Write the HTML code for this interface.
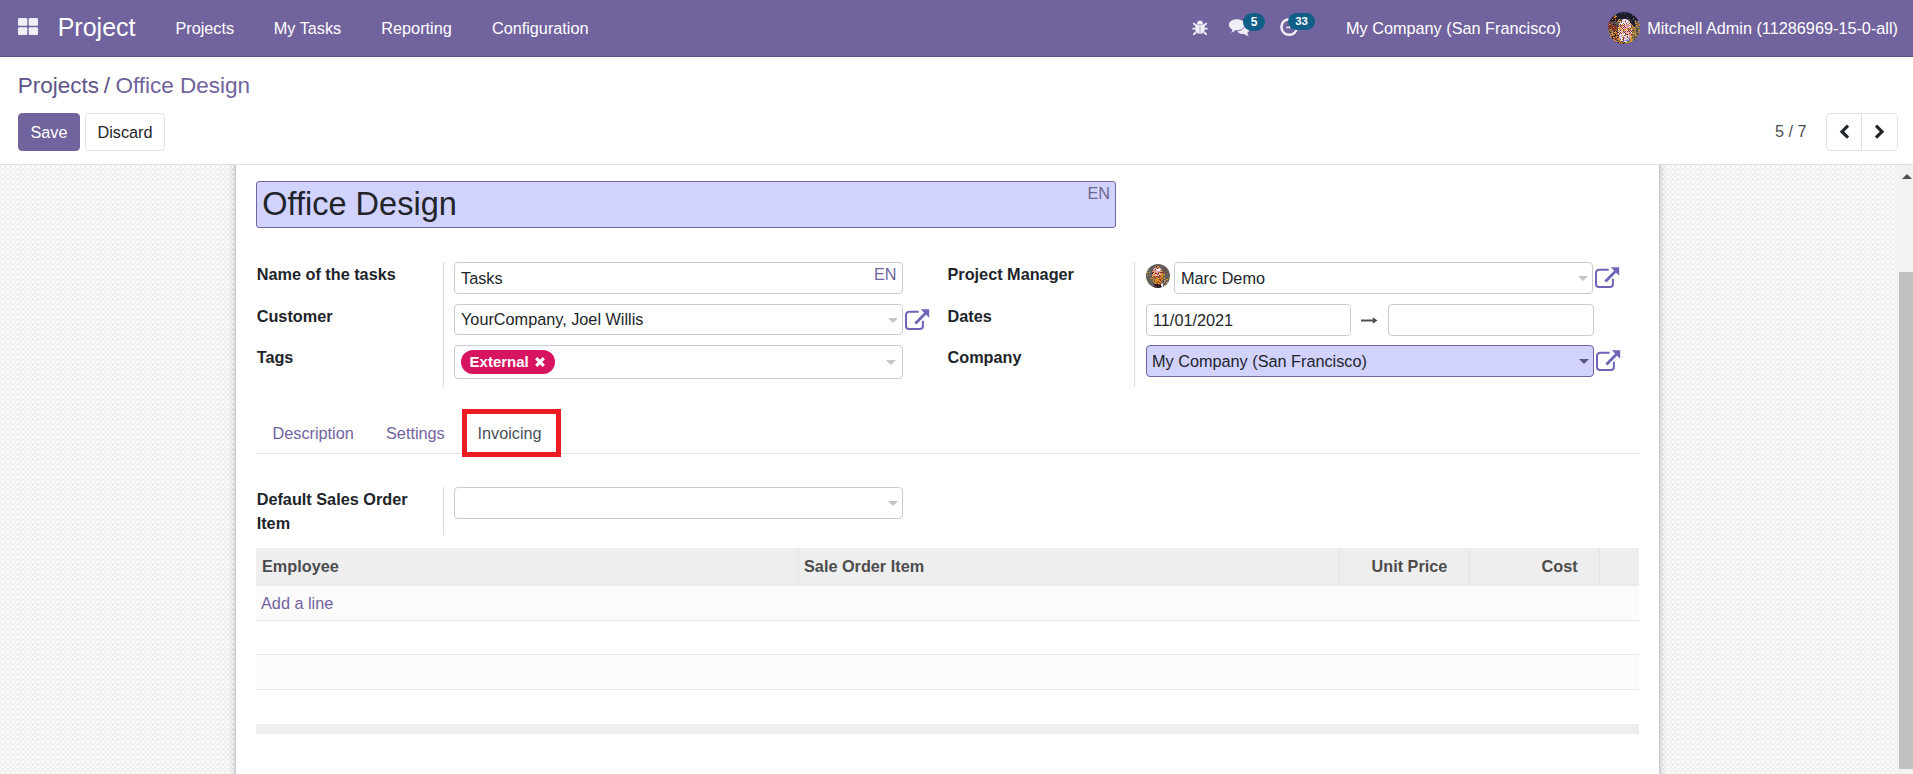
<!DOCTYPE html>
<html lang="en">
<head>
<meta charset="utf-8">
<title>Office Design - Odoo</title>
<style>
*{box-sizing:border-box;margin:0;padding:0}
html,body{width:1913px;height:774px;overflow:hidden;background:#fff}
body{font-family:"Liberation Sans",sans-serif;font-size:16.25px;line-height:24.375px;color:#212529;position:relative}
.abs{position:absolute}
/* ---------- navbar ---------- */
.navbar{position:absolute;left:0;top:0;width:1913px;height:57px;background:#71639e;border-bottom:1px solid #5b5084;color:#fff}
.navbar .t{position:absolute;white-space:nowrap;color:#fff;line-height:24px}
.brand{font-size:25px;left:57.7px;top:12px;line-height:30px !important}
.appsicon{position:absolute;left:18px;top:18px;width:20px;height:17px}
.badge{position:absolute;background:#115e89;color:#fff;font-weight:bold;font-size:12px;line-height:18px;height:18px;border-radius:9px;text-align:center}
.avatar{position:absolute;border-radius:50%;overflow:hidden}
/* ---------- control panel ---------- */
.cp{position:absolute;left:0;top:57px;width:1913px;height:108px;background:#fff;border-bottom:1px solid #dcdfe4}
.bc{position:absolute;left:17.8px;top:14px;font-size:22.5px;line-height:30px;white-space:nowrap;color:#71639e}
.bc .a{color:#5e5389}
.btn{position:absolute;top:56px;height:38px;border-radius:4px;font-size:16.25px;line-height:36px;text-align:center;border:1px solid transparent}
.btn-save{left:18px;width:62px;background:#71639e;border-color:#71639e;color:#fff}
.btn-discard{left:85px;width:80px;background:#fff;border-color:#dee2e6;color:#212529}
.pager{position:absolute;left:1775px;top:62px;font-size:16.25px;line-height:24px;color:#495057;white-space:nowrap}
.pbtn{position:absolute;top:56px;height:38px;width:36px;background:#fff;border:1px solid #dee2e6}
/* ---------- content ---------- */
.content{position:absolute;left:0;top:165px;width:1897px;height:609px;overflow:hidden;
 background:#f4f4f4}
.sheet{position:absolute;left:235px;top:-40px;width:1425px;height:700px;background:#fff;border:1px solid #c8cad0;box-shadow:0 0 8px -1px rgba(0,0,0,.28)}
.sb{position:absolute;left:1897px;top:165px;width:16px;height:609px;background:#f2f2f2}
.sb .thumb{position:absolute;left:2px;top:107px;width:14px;height:497px;background:#c1c1c1}
.sb .up{position:absolute;left:5px;top:9px;width:0;height:0;border-left:5px solid transparent;border-right:5px solid transparent;border-bottom:5px solid #505050}
/* form pieces (coords relative to page) */
.page{position:absolute;left:0;top:0;width:1897px;height:774px;overflow:hidden;pointer-events:none}
.inp{position:absolute;background:#fff;border:1px solid #ccc;border-radius:4px;height:32px;white-space:nowrap;font-size:16.25px;line-height:30px;padding-left:6px;color:#212529;overflow:hidden}
.req{background:#d2d2ff;border-color:#71639e}
.lbl{position:absolute;font-weight:bold;color:#212529;white-space:nowrap;font-size:16.25px;line-height:24.375px}
.vsep{position:absolute;width:1px;background:#dcdcdc}
.caret{position:absolute;width:0;height:0;border-left:5px solid transparent;border-right:5px solid transparent;border-top:5px solid #c4c4c4}
.en{position:absolute;color:#71639e;font-size:16.25px;line-height:24px}
.ext{position:absolute;width:25px;height:22px}
.tag{position:absolute;left:461px;top:350px;width:94px;height:24px;border-radius:12px;background:#d6145f;color:#fff;font-weight:bold;font-size:15px;line-height:24px;padding-left:8.6px;white-space:nowrap}
.tabs{position:absolute;left:256px;top:453px;width:1383px;height:1px;background:#dee2e6}
.tab{position:absolute;top:421px;font-size:16.25px;line-height:24px;color:#71639e;white-space:nowrap}
.redbox{position:absolute;left:462px;top:409px;width:99px;height:48px;border:5px solid #ed1c24}
/* list */
.lst{position:absolute;left:256px;width:1383px}
.th{position:absolute;font-weight:bold;color:#4c4c4c;font-size:16.25px;line-height:24px;white-space:nowrap}
.csep{position:absolute;top:548px;width:1px;height:36px;background:#e1e3e6}
</style>
</head>
<body>

<!-- ================= NAVBAR ================= -->
<header class="navbar">
  <svg class="appsicon" viewBox="0 0 20 17"><g fill="#f1eff6"><rect x="0" y="0" width="9.300" height="7.800" rx="1.200"/><rect x="10.700" y="0" width="9.300" height="7.800" rx="1.200"/><rect x="0" y="9.200" width="9.300" height="7.800" rx="1.200"/><rect x="10.700" y="9.200" width="9.300" height="7.800" rx="1.200"/></g></svg>
  <span class="t brand">Project</span>
  <nav>
    <span class="t" style="left:175.4px;top:16px">Projects</span>
    <span class="t" style="left:273.8px;top:16px">My Tasks</span>
    <span class="t" style="left:381.3px;top:16px">Reporting</span>
    <span class="t" style="left:491.9px;top:16px">Configuration</span>
  </nav>
  <!-- bug -->
  <svg class="abs" style="left:1192px;top:20px;width:16px;height:16px" viewBox="0 0 16 16"><g fill="#f1eff6"><path d="M5 4.500a3 3.900 0 0 1 6 0z"/><path d="M3.200 4.800h4.550v9.300c-2.700-.2-4.550-2.200-4.550-4.800z"/><path d="M12.800 4.800H8.250v9.300c2.700-.2 4.550-2.200 4.550-4.800z"/></g><g stroke="#f1eff6" stroke-width="1.900" fill="none"><path d="M.4 8.650h3.200M15.600 8.650h-3.200M1.200 3.300l3 2M14.800 3.300l-3 2M1.400 14.700l2.600-2.500M14.600 14.700l-2.600-2.500"/></g></svg>
  <!-- chat -->
  <svg class="abs" style="left:1229px;top:18px;width:21px;height:18px" viewBox="0 0 21 18"><g fill="#f1eff6"><path d="M14 6.900c3.500 0 6.300 2.100 6.300 4.600 0 1.400-.8 2.600-2.100 3.500.3 1.100.9 2 1.600 2.900-1.800-.2-3.400-.9-4.500-1.900-.4.100-.9.100-1.300.1-3.500 0-6.300-2.100-6.300-4.600s2.800-4.600 6.300-4.600z"/><path d="M7.800 1.200c4.300 0 7.800 2.500 7.800 5.600s-3.500 5.600-7.800 5.600c-.5 0-1-.03-1.500-.1-1.200 1.200-2.700 2.100-4.500 2.300.8-.9 1.400-1.900 1.600-3.100C1.300 10.500 0 8.800 0 6.800 0 3.700 3.500 1.200 7.800 1.200z" stroke="#71639e" stroke-width="0.900" transform="translate(7.800 6.800) scale(1.070) translate(-7.800 -6.800)"/></g></svg>
  <span class="badge" style="left:1243px;top:12.800px;width:22px">5</span>
  <!-- clock -->
  <svg class="abs" style="left:1279px;top:16.900px;width:20px;height:20px" viewBox="0 0 20 20"><circle cx="10.200" cy="10" r="7.800" fill="none" stroke="#f1eff6" stroke-width="2.500"/><path d="M10.700 5.500v5.100H7.200" fill="none" stroke="#f1eff6" stroke-width="1.500"/></svg>
  <span class="badge" style="left:1288px;top:12.500px;width:27px;height:17.500px;line-height:17px;font-size:11.400px">33</span>
  <span class="t" style="left:1346px;top:16px">My Company (San Francisco)</span>
  <!-- user avatar -->
  <svg class="avatar" style="left:1608px;top:12px;width:32px;height:32px" viewBox="0 0 32 32" shape-rendering="crispEdges"><path fill="#1c1c2a" d="M10 0h12v1h-12zM8 1h5v1h-5zM14 1h2v1h-2zM17 1h7v1h-7zM6 2h20v1h-20zM6 3h1v1h-1zM8 3h16v1h-16zM25 3h2v1h-2zM4 4h1v1h-1zM9 4h19v1h-19zM3 5h3v1h-3zM8 5h11v1h-11zM20 5h9v1h-9zM2 6h3v1h-3zM6 6h19v1h-19zM26 6h4v1h-4zM2 7h2v1h-2zM5 7h2v1h-2zM9 7h1v1h-1zM22 7h3v1h-3zM26 7h4v1h-4zM1 8h9v1h-9zM22 8h5v1h-5zM28 8h3v1h-3zM5 9h1v1h-1zM8 9h1v1h-1zM22 9h1v1h-1zM24 9h2v1h-2zM22 10h5v1h-5zM23 11h4v1h-4zM5 12h1v1h-1zM7 12h1v1h-1zM24 12h3v1h-3zM9 13h1v1h-1zM25 13h2v1h-2zM26 14h1v1h-1zM1 19h1v1h-1zM6 19h1v1h-1zM8 19h1v1h-1zM2 20h1v1h-1zM9 20h1v1h-1zM0 21h1v1h-1zM6 21h1v1h-1zM7 22h1v1h-1zM1 23h1v1h-1zM7 23h1v1h-1zM10 23h1v1h-1zM4 24h1v1h-1zM6 24h1v1h-1zM2 25h1v1h-1zM4 25h1v1h-1zM9 25h1v1h-1zM4 26h1v1h-1zM4 27h1v1h-1zM5 28h1v1h-1zM9 28h1v1h-1zM9 30h2v1h-2zM16 30h1v1h-1zM15 31h1v1h-1z"/><path fill="#62605f" d="M13 1h1v1h-1zM16 1h1v1h-1zM24 3h1v1h-1zM19 5h1v1h-1zM25 6h1v1h-1zM10 7h1v1h-1zM12 7h1v1h-1zM14 7h1v1h-1zM19 7h3v1h-3zM25 7h1v1h-1zM13 8h1v1h-1zM20 8h2v1h-2zM27 8h1v1h-1zM6 9h2v1h-2zM13 9h1v1h-1zM17 9h1v1h-1zM23 9h1v1h-1zM26 9h1v1h-1zM28 9h2v1h-2zM3 10h1v1h-1zM5 10h1v1h-1zM8 10h4v1h-4zM13 10h1v1h-1zM27 10h3v1h-3zM31 10h1v1h-1zM3 11h2v1h-2zM7 11h4v1h-4zM15 11h1v1h-1zM18 11h1v1h-1zM21 11h1v1h-1zM29 11h3v1h-3zM2 12h1v1h-1zM8 12h2v1h-2zM28 12h1v1h-1zM4 13h1v1h-1zM10 13h1v1h-1zM23 13h1v1h-1zM30 13h1v1h-1zM8 14h1v1h-1zM25 14h1v1h-1zM29 14h3v1h-3zM0 15h2v1h-2zM23 15h1v1h-1zM28 15h2v1h-2zM31 15h1v1h-1zM3 16h1v1h-1zM8 16h2v1h-2zM24 16h2v1h-2zM27 16h5v1h-5zM0 17h1v1h-1zM7 17h1v1h-1zM26 17h1v1h-1zM28 17h1v1h-1zM30 17h1v1h-1zM0 18h1v1h-1zM3 18h2v1h-2zM27 18h2v1h-2zM3 19h1v1h-1zM5 19h1v1h-1zM9 19h1v1h-1zM25 19h2v1h-2zM29 19h2v1h-2zM0 20h2v1h-2zM3 20h1v1h-1zM5 20h1v1h-1zM22 20h1v1h-1zM24 20h1v1h-1zM26 20h1v1h-1zM28 20h2v1h-2zM2 21h1v1h-1zM28 21h3v1h-3zM1 22h3v1h-3zM9 22h1v1h-1zM11 22h1v1h-1zM17 22h1v1h-1zM24 22h2v1h-2zM29 22h2v1h-2zM5 23h1v1h-1zM16 23h1v1h-1zM25 23h2v1h-2zM29 23h1v1h-1zM3 24h1v1h-1zM7 24h1v1h-1zM10 24h1v1h-1zM19 24h1v1h-1zM24 24h1v1h-1zM26 24h3v1h-3zM15 25h1v1h-1zM19 25h1v1h-1zM24 25h3v1h-3zM8 26h2v1h-2zM15 26h1v1h-1zM24 26h1v1h-1zM6 27h1v1h-1zM12 27h1v1h-1zM21 27h1v1h-1zM25 27h1v1h-1zM27 27h1v1h-1zM8 28h1v1h-1zM10 28h1v1h-1zM15 28h1v1h-1zM21 28h1v1h-1zM25 28h1v1h-1zM13 29h3v1h-3zM19 29h2v1h-2zM24 29h2v1h-2zM12 30h1v1h-1zM21 30h2v1h-2zM11 31h1v1h-1zM14 31h1v1h-1zM16 31h1v1h-1zM18 31h3v1h-3z"/><path fill="#8a2c1c" d="M5 3h1v1h-1zM5 4h2v1h-2zM5 6h1v1h-1zM8 7h1v1h-1zM1 9h1v1h-1zM3 9h1v1h-1zM0 10h3v1h-3zM4 10h1v1h-1zM6 10h1v1h-1zM0 11h2v1h-2zM0 12h1v1h-1zM3 12h1v1h-1zM6 12h1v1h-1zM12 12h1v1h-1zM16 12h1v1h-1zM0 13h1v1h-1zM2 13h2v1h-2zM7 13h2v1h-2zM13 13h1v1h-1zM15 13h1v1h-1zM0 14h6v1h-6zM7 14h1v1h-1zM9 14h2v1h-2zM12 14h1v1h-1zM16 14h1v1h-1zM23 14h1v1h-1zM2 15h3v1h-3zM6 15h3v1h-3zM13 15h1v1h-1zM15 15h1v1h-1zM17 15h1v1h-1zM0 16h3v1h-3zM4 16h4v1h-4zM14 16h1v1h-1zM20 16h1v1h-1zM22 16h1v1h-1zM4 17h3v1h-3zM8 17h1v1h-1zM15 17h1v1h-1zM21 17h1v1h-1zM5 18h3v1h-3zM9 18h1v1h-1zM12 18h1v1h-1zM20 18h1v1h-1zM22 18h1v1h-1zM15 19h1v1h-1zM17 19h1v1h-1zM19 19h1v1h-1zM21 19h1v1h-1zM23 19h1v1h-1zM10 20h1v1h-1zM12 20h1v1h-1zM16 20h1v1h-1zM5 21h1v1h-1zM8 21h1v1h-1zM11 21h1v1h-1zM13 21h1v1h-1zM17 21h1v1h-1zM21 21h1v1h-1zM18 22h2v1h-2zM23 22h1v1h-1zM6 23h1v1h-1zM8 23h2v1h-2zM5 24h1v1h-1zM7 25h1v1h-1zM10 25h1v1h-1zM5 26h1v1h-1zM7 26h1v1h-1zM7 27h2v1h-2zM15 27h1v1h-1zM7 29h1v1h-1zM11 29h1v1h-1zM8 30h1v1h-1zM14 30h1v1h-1zM12 31h1v1h-1z"/><path fill="#d8902c" d="M7 3h1v1h-1zM7 4h2v1h-2zM6 5h2v1h-2zM4 7h1v1h-1zM7 7h1v1h-1zM11 7h1v1h-1zM10 8h1v1h-1zM9 9h4v1h-4zM21 9h1v1h-1zM27 9h1v1h-1zM30 9h1v1h-1zM30 10h1v1h-1zM27 11h2v1h-2zM1 12h1v1h-1zM14 12h1v1h-1zM18 12h1v1h-1zM20 12h1v1h-1zM23 12h1v1h-1zM30 12h2v1h-2zM11 13h1v1h-1zM14 13h1v1h-1zM18 13h1v1h-1zM24 13h1v1h-1zM28 13h2v1h-2zM31 13h1v1h-1zM14 14h1v1h-1zM24 14h1v1h-1zM28 14h1v1h-1zM5 15h1v1h-1zM11 15h1v1h-1zM21 15h1v1h-1zM24 15h4v1h-4zM30 15h1v1h-1zM10 16h3v1h-3zM18 16h2v1h-2zM23 16h1v1h-1zM26 16h1v1h-1zM2 17h2v1h-2zM11 17h3v1h-3zM16 17h2v1h-2zM19 17h2v1h-2zM22 17h1v1h-1zM24 17h2v1h-2zM27 17h1v1h-1zM31 17h1v1h-1zM1 18h1v1h-1zM8 18h1v1h-1zM10 18h1v1h-1zM14 18h3v1h-3zM18 18h1v1h-1zM26 18h1v1h-1zM30 18h2v1h-2zM0 19h1v1h-1zM2 19h1v1h-1zM4 19h1v1h-1zM7 19h1v1h-1zM11 19h1v1h-1zM24 19h1v1h-1zM27 19h1v1h-1zM31 19h1v1h-1zM4 20h1v1h-1zM6 20h3v1h-3zM14 20h1v1h-1zM20 20h1v1h-1zM25 20h1v1h-1zM27 20h1v1h-1zM30 20h2v1h-2zM1 21h1v1h-1zM3 21h2v1h-2zM7 21h1v1h-1zM9 21h1v1h-1zM24 21h4v1h-4zM31 21h1v1h-1zM4 22h3v1h-3zM8 22h1v1h-1zM22 22h1v1h-1zM26 22h2v1h-2zM2 23h3v1h-3zM14 23h1v1h-1zM17 23h1v1h-1zM21 23h4v1h-4zM27 23h2v1h-2zM30 23h1v1h-1zM2 24h1v1h-1zM8 24h2v1h-2zM15 24h1v1h-1zM18 24h1v1h-1zM23 24h1v1h-1zM25 24h1v1h-1zM29 24h1v1h-1zM3 25h1v1h-1zM5 25h2v1h-2zM8 25h1v1h-1zM14 25h1v1h-1zM23 25h1v1h-1zM29 25h1v1h-1zM3 26h1v1h-1zM6 26h1v1h-1zM10 26h2v1h-2zM22 26h2v1h-2zM25 26h1v1h-1zM27 26h2v1h-2zM5 27h1v1h-1zM9 27h3v1h-3zM14 27h1v1h-1zM22 27h3v1h-3zM6 28h2v1h-2zM11 28h2v1h-2zM22 28h3v1h-3zM26 28h1v1h-1zM6 29h1v1h-1zM8 29h3v1h-3zM12 29h1v1h-1zM21 29h3v1h-3zM11 30h1v1h-1zM13 30h1v1h-1zM15 30h1v1h-1zM17 30h4v1h-4zM23 30h1v1h-1zM10 31h1v1h-1zM13 31h1v1h-1zM17 31h1v1h-1z"/><path fill="#4a4648" d="M13 7h1v1h-1zM11 8h2v1h-2zM2 9h1v1h-1zM4 9h1v1h-1zM7 10h1v1h-1zM2 11h1v1h-1zM5 11h2v1h-2zM4 12h1v1h-1zM10 12h1v1h-1zM27 12h1v1h-1zM29 12h1v1h-1zM1 13h1v1h-1zM5 13h2v1h-2zM27 13h1v1h-1zM6 14h1v1h-1zM27 14h1v1h-1zM9 15h1v1h-1zM1 17h1v1h-1zM9 17h1v1h-1zM29 17h1v1h-1zM2 18h1v1h-1zM24 18h2v1h-2zM29 18h1v1h-1zM28 19h1v1h-1zM28 22h1v1h-1zM27 25h2v1h-2zM26 26h1v1h-1zM26 27h1v1h-1zM21 31h1v1h-1z"/><path fill="#ececf2" d="M15 7h3v1h-3zM14 8h3v1h-3zM18 8h2v1h-2zM18 9h3v1h-3zM12 10h1v1h-1zM14 10h3v1h-3zM18 10h1v1h-1zM12 11h3v1h-3zM16 11h1v1h-1zM19 11h2v1h-2zM13 12h1v1h-1zM15 12h1v1h-1zM17 12h1v1h-1zM21 12h1v1h-1zM15 14h1v1h-1zM17 14h1v1h-1zM21 14h2v1h-2zM12 15h1v1h-1zM14 15h1v1h-1zM18 15h1v1h-1zM22 15h1v1h-1zM15 16h1v1h-1zM10 17h1v1h-1zM14 17h1v1h-1zM18 17h1v1h-1zM23 17h1v1h-1zM13 18h1v1h-1zM17 18h1v1h-1zM19 18h1v1h-1zM12 19h1v1h-1zM14 19h1v1h-1zM18 19h1v1h-1zM22 19h1v1h-1zM13 20h1v1h-1zM23 20h1v1h-1zM10 21h1v1h-1zM14 21h1v1h-1zM16 21h1v1h-1zM20 21h1v1h-1zM12 22h5v1h-5zM11 23h2v1h-2zM15 23h1v1h-1zM18 23h1v1h-1zM20 23h1v1h-1zM12 24h1v1h-1zM14 24h1v1h-1zM16 24h2v1h-2zM20 24h1v1h-1zM22 24h1v1h-1zM11 25h3v1h-3zM17 25h2v1h-2zM13 26h2v1h-2zM18 26h2v1h-2zM13 27h1v1h-1zM16 27h2v1h-2zM20 27h1v1h-1zM13 28h2v1h-2zM16 29h3v1h-3z"/><path fill="#e090c0" d="M18 7h1v1h-1zM17 8h1v1h-1zM15 9h1v1h-1zM17 10h1v1h-1zM19 10h2v1h-2zM11 11h1v1h-1zM19 12h1v1h-1zM22 12h1v1h-1zM12 13h1v1h-1zM16 13h2v1h-2zM19 13h4v1h-4zM11 14h1v1h-1zM13 14h1v1h-1zM18 14h3v1h-3zM16 15h1v1h-1zM19 15h1v1h-1zM16 16h2v1h-2zM11 18h1v1h-1zM21 18h1v1h-1zM23 18h1v1h-1zM13 19h1v1h-1zM16 19h1v1h-1zM20 19h1v1h-1zM15 20h1v1h-1zM18 20h1v1h-1zM12 21h1v1h-1zM15 21h1v1h-1zM19 21h1v1h-1zM22 21h2v1h-2zM10 22h1v1h-1zM20 22h2v1h-2zM13 23h1v1h-1zM19 23h1v1h-1zM11 24h1v1h-1zM13 24h1v1h-1zM21 24h1v1h-1zM16 25h1v1h-1zM20 25h3v1h-3zM12 26h1v1h-1zM16 26h2v1h-2zM18 27h1v1h-1zM16 28h1v1h-1z"/><path fill="#e8c8a0" d="M14 9h1v1h-1zM16 9h1v1h-1zM21 10h1v1h-1zM17 11h1v1h-1zM22 11h1v1h-1zM11 12h1v1h-1zM10 15h1v1h-1zM20 15h1v1h-1zM13 16h1v1h-1zM21 16h1v1h-1zM10 19h1v1h-1zM11 20h1v1h-1zM17 20h1v1h-1zM19 20h1v1h-1zM21 20h1v1h-1zM18 21h1v1h-1z"/><path fill="#8484c4" d="M20 26h2v1h-2zM19 27h1v1h-1zM17 28h4v1h-4z"/></svg>
  <span class="t" style="left:1647.200px;top:16px">Mitchell Admin (11286969-15-0-all)</span>
</header>

<!-- ================= CONTROL PANEL ================= -->
<section class="cp">
  <div class="bc"><span class="a">Projects</span><span class="a" style="margin-left:4.700px">/</span><span style="margin-left:5.400px">Office Design</span></div>
  <div class="btn btn-save">Save</div>
  <div class="btn btn-discard">Discard</div>
  <div class="pager">5 / 7</div>
  <div class="pbtn" style="left:1826px;border-radius:4px 0 0 4px"><svg viewBox="0 0 34 36" width="34" height="36" style="position:absolute;left:0;top:0"><path d="M21 11.700L15 17.700L21 23.700" fill="none" stroke="#212529" stroke-width="3.200"/></svg></div>
  <div class="pbtn" style="left:1861px;width:37px;border-radius:0 4px 4px 0"><svg viewBox="0 0 34 36" width="34" height="36" style="position:absolute;left:0;top:0"><path d="M14 11.700L20 17.700L14 23.700" fill="none" stroke="#212529" stroke-width="3.200"/></svg></div>
</section>

<!-- ================= CONTENT ================= -->
<main class="content"><svg class="abs" style="left:0;top:0" width="1897" height="609" shape-rendering="crispEdges"><defs><pattern id="sheetbg" width="5" height="5" patternUnits="userSpaceOnUse"><rect x="0" y="0" width="1" height="1" fill="#f4f4f4"/><rect x="1" y="0" width="1" height="1" fill="#f6f6f6"/><rect x="2" y="0" width="1" height="1" fill="#f3f3f3"/><rect x="3" y="0" width="1" height="1" fill="#f3f3f3"/><rect x="4" y="0" width="1" height="1" fill="#f7f7f7"/><rect x="0" y="1" width="1" height="1" fill="#ededed"/><rect x="1" y="1" width="1" height="1" fill="#f4f4f4"/><rect x="2" y="1" width="1" height="1" fill="#ffffff"/><rect x="3" y="1" width="1" height="1" fill="#ffffff"/><rect x="4" y="1" width="1" height="1" fill="#f2f2f2"/><rect x="0" y="2" width="1" height="1" fill="#ededed"/><rect x="1" y="2" width="1" height="1" fill="#f4f4f4"/><rect x="2" y="2" width="1" height="1" fill="#ffffff"/><rect x="3" y="2" width="1" height="1" fill="#ffffff"/><rect x="4" y="2" width="1" height="1" fill="#f2f2f2"/><rect x="0" y="3" width="1" height="1" fill="#f8f8f8"/><rect x="1" y="3" width="1" height="1" fill="#f3f3f3"/><rect x="2" y="3" width="1" height="1" fill="#f0f0f0"/><rect x="3" y="3" width="1" height="1" fill="#f0f0f0"/><rect x="4" y="3" width="1" height="1" fill="#f4f4f4"/><rect x="0" y="4" width="1" height="1" fill="#fdfdfd"/><rect x="1" y="4" width="1" height="1" fill="#f2f2f2"/><rect x="2" y="4" width="1" height="1" fill="#ebebeb"/><rect x="3" y="4" width="1" height="1" fill="#ebebeb"/><rect x="4" y="4" width="1" height="1" fill="#f3f3f3"/></pattern></defs><rect width="1897" height="609" fill="url(#sheetbg)"/></svg><div class="sheet"></div></main>
<div class="sb"><div class="up"></div><div class="thumb"></div></div>

<div class="page">
  <!-- title -->
  <div class="inp req" style="left:256px;top:181px;width:860px;height:47px;font-size:32.500px;line-height:45px;padding-left:5.300px;border-radius:3px">Office Design</div>
  <span class="en" style="left:1087.500px;top:181px;color:#6c6a92">EN</span>

  <!-- left group -->
  <div class="vsep" style="left:443px;top:262px;height:125px"></div>
  <span class="lbl" style="left:256.7px;top:262px">Name of the tasks</span>
  <span class="lbl" style="left:256.7px;top:304px">Customer</span>
  <span class="lbl" style="left:256.7px;top:345px">Tags</span>
  <div class="inp" style="left:454px;top:262px;width:449px">Tasks</div>
  <span class="en" style="left:874px;top:262px">EN</span>
  <div class="inp" style="left:454px;top:304px;width:449px;height:31px;line-height:28px">YourCompany, Joel Willis</div>
  <div class="caret" style="left:888px;top:317.500px"></div>
  <div class="inp" style="left:454px;top:345px;width:449px;height:34px"></div>
  <div class="tag">External<svg width="12" height="12" viewBox="0 0 12 12" style="position:absolute;left:72.7px;top:6.3px"><path d="M2.200 2.200l7.600 7.600M9.800 2.200l-7.600 7.600" stroke="#fff" stroke-width="3.100"/></svg></div>
  <div class="caret" style="left:886px;top:360px"></div>

  <!-- right group -->
  <div class="vsep" style="left:1134px;top:262px;height:125px"></div>
  <span class="lbl" style="left:947.500px;top:262px">Project Manager</span>
  <span class="lbl" style="left:947.500px;top:304px">Dates</span>
  <span class="lbl" style="left:947.500px;top:345px">Company</span>
  <svg class="avatar" style="left:1146px;top:264px;width:24px;height:24px" viewBox="0 0 24 24" shape-rendering="crispEdges"><path fill="#62605f" d="M6 0h12v1h-12zM5 1h14v1h-14zM3 2h7v1h-7zM13 2h8v1h-8zM2 3h7v1h-7zM10 3h1v1h-1zM12 3h1v1h-1zM14 3h6v1h-6zM21 3h1v1h-1zM2 4h6v1h-6zM15 4h3v1h-3zM19 4h3v1h-3zM1 5h6v1h-6zM16 5h3v1h-3zM20 5h3v1h-3zM0 6h2v1h-2zM3 6h4v1h-4zM15 6h9v1h-9zM0 7h6v1h-6zM17 7h1v1h-1zM19 7h5v1h-5zM0 8h1v1h-1zM2 8h1v1h-1zM4 8h2v1h-2zM18 8h2v1h-2zM21 8h3v1h-3zM0 9h6v1h-6zM17 9h7v1h-7zM0 10h1v1h-1zM2 10h4v1h-4zM19 10h5v1h-5zM0 11h3v1h-3zM4 11h2v1h-2zM17 11h1v1h-1zM19 11h5v1h-5zM0 12h6v1h-6zM13 12h1v1h-1zM17 12h7v1h-7zM0 13h7v1h-7zM8 13h1v1h-1zM13 13h1v1h-1zM17 13h1v1h-1zM19 13h4v1h-4zM0 14h4v1h-4zM9 14h1v1h-1zM17 14h1v1h-1zM19 14h5v1h-5zM0 15h7v1h-7zM8 15h1v1h-1zM17 15h3v1h-3zM22 15h1v1h-1zM1 16h6v1h-6zM8 16h1v1h-1zM16 16h2v1h-2zM20 16h4v1h-4zM0 17h1v1h-1zM2 17h5v1h-5zM16 17h8v1h-8zM1 18h7v1h-7zM16 18h2v1h-2zM19 18h1v1h-1zM22 18h1v1h-1zM2 19h7v1h-7zM14 19h1v1h-1zM17 19h5v1h-5zM2 20h6v1h-6zM17 20h5v1h-5zM3 21h5v1h-5zM17 21h1v1h-1zM19 21h1v1h-1zM5 22h3v1h-3zM15 22h1v1h-1zM17 22h1v1h-1zM6 23h2v1h-2zM16 23h2v1h-2z"/><path fill="#8a2c1c" d="M10 2h1v1h-1zM20 3h1v1h-1zM11 4h1v1h-1zM18 4h1v1h-1zM9 5h1v1h-1zM19 5h1v1h-1zM18 7h1v1h-1zM6 8h2v1h-2zM12 8h1v1h-1zM14 8h4v1h-4zM20 8h1v1h-1zM9 9h2v1h-2zM12 9h1v1h-1zM11 10h1v1h-1zM13 11h1v1h-1zM8 12h1v1h-1zM10 12h2v1h-2zM14 12h1v1h-1zM9 13h1v1h-1zM12 13h1v1h-1zM7 14h1v1h-1zM15 14h1v1h-1zM13 15h2v1h-2zM14 16h1v1h-1zM8 17h1v1h-1zM12 17h1v1h-1zM15 17h1v1h-1zM10 18h1v1h-1zM13 18h1v1h-1zM11 19h1v1h-1zM12 20h3v1h-3zM8 21h1v1h-1zM9 22h2v1h-2zM12 22h1v1h-1z"/><path fill="#d8902c" d="M11 2h2v1h-2zM9 3h1v1h-1zM11 3h1v1h-1zM13 3h1v1h-1zM15 5h1v1h-1zM2 6h1v1h-1zM7 6h1v1h-1zM9 6h1v1h-1zM6 7h1v1h-1zM15 7h2v1h-2zM1 8h1v1h-1zM3 8h1v1h-1zM9 8h1v1h-1zM13 8h1v1h-1zM8 9h1v1h-1zM16 9h1v1h-1zM1 10h1v1h-1zM6 10h1v1h-1zM8 10h1v1h-1zM15 10h1v1h-1zM17 10h2v1h-2zM3 11h1v1h-1zM6 11h1v1h-1zM14 11h3v1h-3zM18 11h1v1h-1zM6 12h2v1h-2zM9 12h1v1h-1zM15 12h2v1h-2zM7 13h1v1h-1zM10 13h2v1h-2zM14 13h2v1h-2zM18 13h1v1h-1zM23 13h1v1h-1zM4 14h3v1h-3zM8 14h1v1h-1zM11 14h4v1h-4zM16 14h1v1h-1zM18 14h1v1h-1zM7 15h1v1h-1zM9 15h4v1h-4zM15 15h1v1h-1zM20 15h2v1h-2zM23 15h1v1h-1zM0 16h1v1h-1zM7 16h1v1h-1zM9 16h2v1h-2zM12 16h2v1h-2zM15 16h1v1h-1zM19 16h1v1h-1zM1 17h1v1h-1zM7 17h1v1h-1zM9 17h3v1h-3zM13 17h2v1h-2zM8 18h1v1h-1zM12 18h1v1h-1zM15 18h1v1h-1zM18 18h1v1h-1zM21 18h1v1h-1zM9 19h2v1h-2zM12 19h2v1h-2zM15 19h1v1h-1zM18 21h1v1h-1zM20 21h1v1h-1zM18 22h1v1h-1z"/><path fill="#e8c8a0" d="M8 4h2v1h-2zM13 4h1v1h-1zM14 5h1v1h-1zM10 6h1v1h-1zM10 7h1v1h-1zM14 7h1v1h-1zM11 8h1v1h-1zM7 9h1v1h-1zM13 9h2v1h-2zM9 10h2v1h-2zM13 10h1v1h-1zM9 11h3v1h-3z"/><path fill="#e090c0" d="M10 4h1v1h-1zM12 4h1v1h-1zM14 4h1v1h-1zM7 5h2v1h-2zM8 6h1v1h-1zM14 6h1v1h-1zM7 7h3v1h-3zM11 7h3v1h-3zM8 8h1v1h-1zM10 8h1v1h-1zM11 9h1v1h-1zM7 10h1v1h-1zM12 10h1v1h-1zM14 10h1v1h-1zM7 11h2v1h-2zM12 11h1v1h-1zM18 16h1v1h-1zM20 18h1v1h-1zM16 19h1v1h-1z"/><path fill="#ececf2" d="M10 5h4v1h-4zM11 6h3v1h-3zM15 20h2v1h-2zM15 21h2v1h-2zM16 22h1v1h-1zM15 23h1v1h-1z"/><path fill="#1c1c2a" d="M6 9h1v1h-1zM8 20h4v1h-4zM9 21h6v1h-6zM8 22h1v1h-1zM11 22h1v1h-1zM13 22h2v1h-2zM8 23h7v1h-7z"/><path fill="#c07828" d="M15 9h1v1h-1zM16 10h1v1h-1zM12 12h1v1h-1zM16 13h1v1h-1zM10 14h1v1h-1zM16 15h1v1h-1zM11 16h1v1h-1zM9 18h1v1h-1zM11 18h1v1h-1zM14 18h1v1h-1z"/></svg>
  <div class="inp" style="left:1174px;top:262px;width:419px">Marc Demo</div>
  <div class="caret" style="left:1578px;top:276px"></div>
  <div class="inp" style="left:1146px;top:304px;width:205px">11/01/2021</div>
  <svg class="abs" style="left:1361px;top:315px;width:17px;height:11px" viewBox="0 0 17 11"><path d="M0 5.500h12" stroke="#4d4d4d" stroke-width="2"/><path d="M11.800 2.300l4.700 3.200-4.700 3.200z" fill="#4d4d4d"/></svg>
  <div class="inp" style="left:1388px;top:304px;width:206px"></div>
  <div class="inp req" style="left:1146px;top:345px;width:448px;padding-left:5px">My Company (San Francisco)</div>
  <div class="caret" style="left:1579px;top:359px;border-top-color:#5e5389"></div>

  <!-- external link icons -->
  <svg class="ext" style="left:905px;top:309px" viewBox="0 0 25 22"><g fill="none" stroke="#6d65b8"><path d="M13.700 2.800H4a3 3 0 0 0-3 3v11.100a3 3 0 0 0 3 3h10.900a3 3 0 0 0 3-3v-5.100" stroke-width="2"/><path d="M10.400 14.400L20.500 4.300" stroke-width="2.800"/><path d="M15.800 0.300h8.400v8.400z" fill="#6d65b8" stroke="none"/></g></svg>
  <svg class="ext" style="left:1595px;top:267px" viewBox="0 0 25 22"><g fill="none" stroke="#6d65b8"><path d="M13.700 2.800H4a3 3 0 0 0-3 3v11.100a3 3 0 0 0 3 3h10.900a3 3 0 0 0 3-3v-5.100" stroke-width="2"/><path d="M10.400 14.400L20.500 4.300" stroke-width="2.800"/><path d="M15.800 0.300h8.400v8.400z" fill="#6d65b8" stroke="none"/></g></svg>
  <svg class="ext" style="left:1596px;top:349.5px" viewBox="0 0 25 22"><g fill="none" stroke="#6d65b8"><path d="M13.700 2.800H4a3 3 0 0 0-3 3v11.100a3 3 0 0 0 3 3h10.900a3 3 0 0 0 3-3v-5.100" stroke-width="2"/><path d="M10.400 14.400L20.500 4.300" stroke-width="2.800"/><path d="M15.800 0.300h8.400v8.400z" fill="#6d65b8" stroke="none"/></g></svg>

  <!-- notebook tabs -->
  <div class="tabs"></div>
  <span class="tab" style="left:272.5px">Description</span>
  <span class="tab" style="left:386px">Settings</span>
  <span class="tab" style="left:477.5px;color:#495057">Invoicing</span>
  <div class="redbox"></div>

  <!-- invoicing tab content -->
  <div class="vsep" style="left:443px;top:487px;height:48px"></div>
  <span class="lbl" style="left:256.7px;top:487px">Default Sales Order<br>Item</span>
  <div class="inp" style="left:454px;top:487px;width:449px"></div>
  <div class="caret" style="left:888px;top:500.5px"></div>

  <!-- list -->
  <div class="lst" style="top:548px;height:38px;background:#eeeeee;border-bottom:2px solid #e8eaed"></div>
  <div class="csep" style="left:798px"></div>
  <div class="csep" style="left:1339px"></div>
  <div class="csep" style="left:1469px"></div>
  <div class="csep" style="left:1599px"></div>
  <span class="th" style="left:262px;top:554px">Employee</span>
  <span class="th" style="left:804px;top:554px">Sale Order Item</span>
  <span class="th" style="left:1371.5px;top:554px">Unit Price</span>
  <span class="th" style="left:1541.5px;top:554px">Cost</span>
  <div class="lst" style="top:586px;height:35px;background:#fbfbfb;border-bottom:1px solid #e7e9ec"></div>
  <span class="tab" style="left:261px;top:591px">Add a line</span>
  <div class="lst" style="top:621px;height:34px;background:#fff;border-bottom:1px solid #e7e9ec"></div>
  <div class="lst" style="top:655px;height:35px;background:#fbfbfb;border-bottom:1px solid #e7e9ec"></div>
  <div class="lst" style="top:724px;height:10px;background:#eeeeee"></div>
</div>


</body>
</html>
